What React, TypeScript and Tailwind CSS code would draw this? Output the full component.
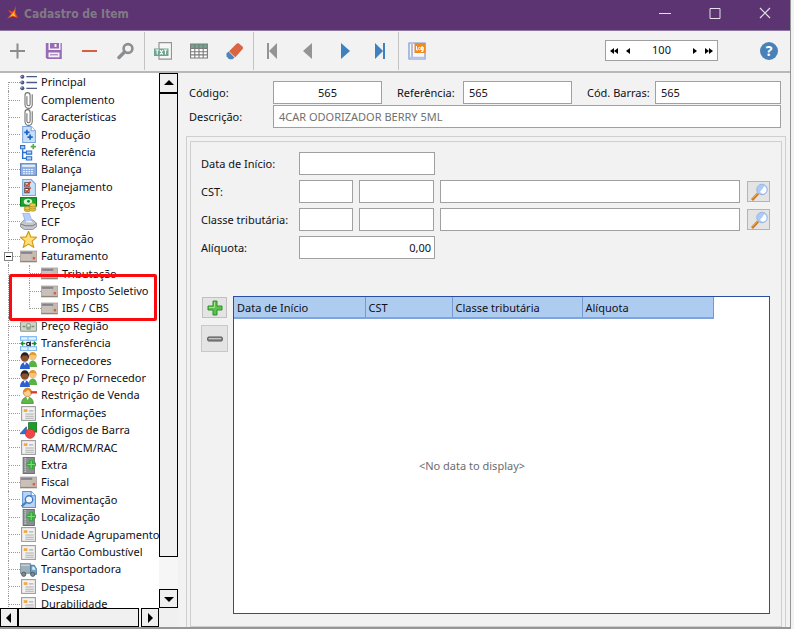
import { ReactNode, useState } from "react";
import clsx from "clsx";

type IconName =
  | "list"
  | "clip"
  | "production"
  | "reference"
  | "scale"
  | "planning"
  | "money"
  | "printer"
  | "star"
  | "card"
  | "banknote"
  | "transfer"
  | "people"
  | "restrict"
  | "info"
  | "shapes"
  | "extra"
  | "movement"
  | "truck";

const icons: Record<IconName, ReactNode> = {
  list: (
    <>
      <path d="M6 2.500h10M6 8h10M6 13.500h10" stroke="#4d5a86" strokeWidth="1.2" />
      <g fill="#4a5388">
        <circle cx="2.200" cy="2.500" r="1.900" />
        <circle cx="2.200" cy="8" r="1.900" />
        <circle cx="2.200" cy="13.500" r="1.900" />
      </g>
      <g fill="#b9c2de">
        <circle cx="1.700" cy="2" r=".7" />
        <circle cx="1.700" cy="7.500" r=".7" />
        <circle cx="1.700" cy="13" r=".7" />
      </g>
    </>
  ),
  clip: (
    <path
      d="M6.500 4v7.500a1.500 1.500 0 0 0 3 0V3a2.200 2.200 0 0 0-4.800 0v9a3.300 3.300 0 0 0 6.800 0V2"
      fill="none"
      stroke="#6f6f6f"
      strokeWidth="1"
    />
  ),
  production: (
    <>
      <path d="M2.500.5h8l4 4v11h-12z" fill="#c9dff8" stroke="#7fa6dc" />
      <path d="M10.500.5v4h4" fill="#fff" stroke="#7fa6dc" />
      <path d="M6.500 3.500v5M4 6h5M9.500 8v5M7 10.500h5" stroke="#1d63c8" strokeWidth="1.600" />
    </>
  ),
  reference: (
    <>
      <path d="M2.500 5v8.500H6M2.500 8H6" fill="none" stroke="#2b70c9" strokeWidth="1.300" />
      <g fill="#b4d5fb" stroke="#2b70c9">
        <path d="M.5 1.500h4v3h-4zM6 6.500h5v3H6zM6 12h5v3H6z" />
      </g>
      <path d="M12.500 0v5M10 2.500h5" stroke="#58a847" strokeWidth="1.500" />
    </>
  ),
  scale: (
    <>
      <rect x=".5" y="2.500" width="15" height="11" fill="#8fb0e0" stroke="#6685bd" />
      <path d="M2 4.500h12" stroke="#e5effc" strokeWidth="2" />
      <path d="M3 8h10M3 10h10M3 12h10" stroke="#fff" strokeDasharray="1.500 1" />
    </>
  ),
  planning: (
    <>
      <path d="M2.500.5h8l4 4v11h-12z" fill="#c9dff8" stroke="#7fa6dc" />
      <path d="M4.500 3.500h4v4h-4zM4.500 9h4v4h-4z" fill="#fff" stroke="#53413f" />
      <path d="m5 5 1.500 1.500L10 2.500M5 10.500 6.500 12 10 8" fill="none" stroke="#d13c25" strokeWidth="1.400" />
    </>
  ),
  money: (
    <>
      <rect x=".5" y="1.500" width="15" height="8" fill="#19a52c" stroke="#0c7d1c" />
      <ellipse cx="7.500" cy="5.500" rx="4" ry="2.800" fill="#d8f3d5" />
      <circle cx="8" cy="5" r="1.300" fill="#168426" />
      <g fill="#e9c84a" stroke="#a98a1b" strokeWidth=".7">
        <ellipse cx="7" cy="13" rx="3" ry="1.800" />
        <ellipse cx="7" cy="11.500" rx="3" ry="1.600" />
        <ellipse cx="12" cy="12.500" rx="3" ry="1.800" />
        <ellipse cx="12" cy="10.500" rx="3" ry="1.800" />
        <ellipse cx="12" cy="8.500" rx="3" ry="1.800" />
      </g>
    </>
  ),
  printer: (
    <>
      <path d="M.5 10 4 6.500h8l3.500 3V13L12 15.500H4L.5 13z" fill="#c4c7cc" stroke="#85898f" strokeWidth=".8" />
      <path d="M1 10.500 5 12h7l3-2" fill="none" stroke="#696d75" strokeWidth=".8" />
      <path d="M2.500 0h6l3 8H5z" fill="#b9cffb" stroke="#8da9e3" strokeWidth=".7" />
      <path d="m5 8.500 1-1h5l1 1.500z" fill="#f5f6f8" />
    </>
  ),
  star: (
    <path
      d="m8 .3 2.100 5.200 5.600.4-4.300 3.600 1.500 5.900L8 12.300l-4.900 3.100 1.500-5.900L.3 5.900l5.600-.4z"
      fill="#ffe07a"
      stroke="#d39a18"
      strokeWidth="1.100"
    />
  ),
  card: (
    <>
      <rect x=".3" y="2.800" width="15.400" height="10.400" fill="#c3bab1" stroke="#a0978e" strokeWidth=".6" />
      <path d="M1 3.500h10.500v2H1z" fill="#85838f" />
      <path d="M1 6.500h9M1 8.500h9M1 10.500h9" stroke="#d3cbc3" strokeWidth=".8" />
      <path d="M12 8.500h2.200v2.200H12z" fill="#e0583a" />
      <path d="M.5 12.700h15" stroke="#8f867d" />
    </>
  ),
  banknote: (
    <>
      <rect x=".5" y="3.500" width="15" height="9" rx="1" fill="#cfd6c8" stroke="#8b9686" />
      <ellipse cx="8" cy="8" rx="2.600" ry="3.300" fill="#98a593" />
      <circle cx="8" cy="7" r="1.200" fill="#e8ece5" />
      <path d="M2.500 8H5M11 8h2.500" stroke="#7d8a79" strokeWidth="1.500" />
    </>
  ),
  transfer: (
    <>
      <path d="M0 1h16v14H0z" fill="#7db8f2" />
      <path d="M1 2h6v2.500H1zM8 2h7v2.500H8zM1 11.500h6V14H1zM8 11.500h7V14H8z" fill="#e4f1fe" />
      <path d="M0 5.500h16v5H0z" fill="#fff" />
      <path d="m0 8 3-2.500v5zM16 8l-3-2.500v5z" fill="#1e8c34" />
      <path d="M2.500 8H5M11 8h2.500" stroke="#1e8c34" strokeWidth="1.500" />
      <circle cx="7.700" cy="8.400" r="1.500" fill="none" stroke="#222" strokeWidth="1.100" />
      <path d="M9.700 6v4.500" stroke="#222" strokeWidth="1.200" />
    </>
  ),
  people: (
    <>
      <circle cx="12" cy="4.300" r="3.500" fill="#f6c27c" />
      <path d="M8.400 4.500c-.4-6 7.600-6 7.200 0L14 2.800H10z" fill="#e39a30" />
      <path d="M8 14c0-8 8-8 8 0z" fill="#59b246" />
      <circle cx="4.500" cy="5.200" r="3.900" fill="#8a4f2d" />
      <path d="M.6 5.800C0-1.500 9.300-1.500 8.400 5.800L6.800 3.200H2.400z" fill="#26201e" />
      <path d="M0 16C0 7.500 9.300 7.500 9.300 16z" fill="#2c5fd0" />
      <path d="m3.300 9.800 1.300 3 1.300-3z" fill="#fff" />
    </>
  ),
  restrict: (
    <>
      <path d="M1.500 15.500c0-8 11-8 11 0z" fill="#5cb748" stroke="#3a8a2b" strokeWidth=".7" />
      <circle cx="7" cy="5.200" r="3.900" fill="#f7cf92" stroke="#b9772a" strokeWidth=".6" />
      <path d="M3 5.500C2-.8 11.800-1 10.900 5 9 4.500 8 3 7.500 2.500 6.500 4 5 4.500 3 5.500z" fill="#e08a24" />
      <path d="m5.800 9.500 1.400 3 1.300-3z" fill="#fff" />
      <path d="M10 5h6" stroke="#dc3a2d" strokeWidth="2.200" />
    </>
  ),
  info: (
    <>
      <rect x="1.500" y="1.500" width="13" height="13" fill="#f1f1f1" stroke="#9b9b9b" />
      <path d="M3.500 4h3.500v2.500H3.500z" fill="#f2a63b" />
      <path d="M8.500 5.500H12.500M5 8.500h8M5 10.500h8M5 12.500h8" stroke="#b0b0b0" />
    </>
  ),
  shapes: (
    <>
      <path d="M8 .5h8v9H8z" fill="#1f9b2c" stroke="#127320" strokeWidth=".7" />
      <path d="M0 11 6 4.500V11z" fill="#2c6fd6" stroke="#1a4ea5" strokeWidth=".7" />
      <circle cx="9.500" cy="11" r="4.500" fill="#ef4545" stroke="#c22" strokeWidth=".5" />
    </>
  ),
  extra: (
    <>
      <path d="M3 .5h10.500v15H3z" fill="#8b8f92" stroke="#6d7073" />
      <path d="M5 1v14" stroke="#c8cbcd" strokeDasharray="1 1" strokeWidth="1.500" />
      <path d="M10.500 2.500v9M6 7h9" stroke="#2fae35" strokeWidth="3.600" />
      <path d="M10.500 3.500v7M7 7h7" stroke="#7fe07a" />
    </>
  ),
  movement: (
    <>
      <path d="M2.500.5h8l4 4v11h-12z" fill="#b7d5fa" stroke="#5c92d8" />
      <path d="M10.500.5v4h4" fill="#fff" stroke="#5c92d8" />
      <circle cx="8.500" cy="8" r="3.500" fill="#edf7ff" stroke="#4477bb" strokeWidth="1.300" />
      <path d="m6 10.500-4.500 4" stroke="#517fb5" strokeWidth="2" />
    </>
  ),
  truck: (
    <>
      <path d="M0 2.500h10v9H0z" fill="#9cb0bc" stroke="#71848f" strokeWidth=".8" />
      <path d="M1 4h8" stroke="#d1dde3" />
      <path d="M10 4h3.500l2.300 4v4.500H10z" fill="#6fa5cf" stroke="#45718f" strokeWidth=".8" />
      <path d="M11.500 5.500h1.700l1.500 2.800h-3.200z" fill="#dcf0fb" />
      <g fill="#83898e" stroke="#4d5357" strokeWidth=".8">
        <circle cx="3.500" cy="12.500" r="2" />
        <circle cx="12" cy="12.500" r="2" />
      </g>
    </>
  ),
};

type TreeItem = { label: string; icon: IconName; child?: boolean; last?: boolean; open?: boolean };

const tree: TreeItem[] = [
  { label: "Principal", icon: "list" },
  { label: "Complemento", icon: "clip" },
  { label: "Características", icon: "clip" },
  { label: "Produção", icon: "production" },
  { label: "Referência", icon: "reference" },
  { label: "Balança", icon: "scale" },
  { label: "Planejamento", icon: "planning" },
  { label: "Preços", icon: "money" },
  { label: "ECF", icon: "printer" },
  { label: "Promoção", icon: "star" },
  { label: "Faturamento", icon: "card", open: true },
  { label: "Tributação", icon: "card", child: true },
  { label: "Imposto Seletivo", icon: "card", child: true },
  { label: "IBS / CBS", icon: "card", child: true, last: true },
  { label: "Preço Região", icon: "banknote" },
  { label: "Transferência", icon: "transfer" },
  { label: "Fornecedores", icon: "people" },
  { label: "Preço p/ Fornecedor", icon: "people" },
  { label: "Restrição de Venda", icon: "restrict" },
  { label: "Informações", icon: "info" },
  { label: "Códigos de Barra", icon: "shapes" },
  { label: "RAM/RCM/RAC", icon: "info" },
  { label: "Extra", icon: "extra" },
  { label: "Fiscal", icon: "card" },
  { label: "Movimentação", icon: "movement" },
  { label: "Localização", icon: "extra" },
  { label: "Unidade Agrupamento", icon: "info" },
  { label: "Cartão Combustível", icon: "info" },
  { label: "Transportadora", icon: "truck" },
  { label: "Despesa", icon: "info" },
  { label: "Durabilidade", icon: "info" },
];

function TreeRow({ item, first }: { item: TreeItem; first: boolean }) {
  return (
    <li className="flex min-h-0 items-stretch pl-2">
      <span
        className={clsx(
          "w-px border-l border-dotted border-[#9a9a9a]",
          first && "mt-2"
        )}
      />
      {item.child && (
        <span className="ml-5 flex w-px flex-col">
          <span className={clsx("border-l border-dotted border-[#9a9a9a]", item.last ? "h-1/2" : "h-full")} />
        </span>
      )}
      <span className="relative w-[11px] self-center border-t border-dotted border-[#9a9a9a]">
        {item.open && (
          <button
            aria-label="Recolher"
            className="absolute -top-[5px] -left-[5px] flex size-[9px] items-center justify-center border border-[#848484] bg-white"
          >
            <span className="h-px w-[5px] bg-black" />
          </button>
        )}
      </span>
      <a href="#" className="flex items-center gap-1 whitespace-nowrap">
        <svg viewBox="0 0 16 16" className="size-[17px] shrink-0">
          {icons[item.icon]}
        </svg>
        {item.label}
      </a>
    </li>
  );
}

function ScrollButton({ label, d, className }: { label: string; d: string; className: string }) {
  return (
    <button
      aria-label={label}
      className={clsx("flex shrink-0 items-center justify-center border border-black bg-[#f0f0f0]", className)}
    >
      <svg viewBox="0 0 10 10" className="size-[10px]">
        <path d={d} />
      </svg>
    </button>
  );
}

function Sidebar() {
  return (
    <aside className="grid w-[178px] shrink-0 grid-cols-[minmax(0,1fr)_19px] grid-rows-[minmax(0,1fr)_19px] bg-white">
      <nav className="relative overflow-hidden">
        <ul className="grid h-[540px] auto-rows-fr pt-px">
          {tree.map((item, i) => (
            <TreeRow key={item.label} item={item} first={i === 0} />
          ))}
        </ul>
        <div className="pointer-events-none absolute top-[201px] left-[9px] h-[47px] w-[148px] rounded-xs border-3 border-[#fb0b10]" />
      </nav>
      <div className="flex flex-col bg-[#f6f6f6]">
        <ScrollButton label="Rolar para cima" d="M5 2 10 7H0z" className="h-[20px]" />
        <div className="h-[464px] border border-black bg-[#f0f0f0]" />
        <div className="flex-1" />
        <ScrollButton label="Rolar para baixo" d="M0 3h10L5 8z" className="h-[19px]" />
      </div>
      <div className="flex bg-[#f6f6f6]">
        <ScrollButton label="Rolar para a esquerda" d="M7 0v10L2 5z" className="w-[18px]" />
        <div className="w-[121px] border border-black bg-[#f0f0f0]" />
        <div className="flex-1" />
        <ScrollButton label="Rolar para a direita" d="M3 0l5 5-5 5z" className="w-[18px]" />
      </div>
      <div className="bg-[#f0f0f0]" />
    </aside>
  );
}

function ToolButton({ label, children }: { label: string; children: ReactNode }) {
  return (
    <button aria-label={label} className="flex w-9 items-center justify-center">
      <svg viewBox="0 0 18 18" className="size-[18px]">
        {children}
      </svg>
    </button>
  );
}

function Separator() {
  return <span className="my-px w-px bg-[#c3c3c3]" />;
}

function Toolbar() {
  const [zoom, setZoom] = useState("100");

  return (
    <div className="flex h-[42px] shrink-0 items-stretch border-b-2 border-[#b8b8b8] bg-[#f2f2f2]">
      <ToolButton label="Novo">
        <path d="M8.500 1.500v15M1 9h15" stroke="#8c8c8c" strokeWidth="2" />
      </ToolButton>
      <ToolButton label="Salvar">
        <path d="M.8 1h16v16H2.200L.8 15.600z" fill="#976bb5" />
        <path d="M3.500 1h1.500v5.500h9V1h1.500v7h-12z" fill="#f2f2f2" />
        <path d="M9.500 2h2v3h-2z" fill="#f2f2f2" />
        <path d="M3.500 10.500h11v4.800h-11z" fill="#f2f2f2" />
        <path d="M5 12.800h8" stroke="#976bb5" />
      </ToolButton>
      <ToolButton label="Excluir">
        <path d="M1 9h15" stroke="#d8603f" strokeWidth="2" />
      </ToolButton>
      <ToolButton label="Pesquisar">
        <circle cx="11" cy="6.500" r="4.400" fill="none" stroke="#8a8f94" strokeWidth="2.600" />
        <path d="m7.500 10-5.500 5.500" stroke="#8a8f94" strokeWidth="3.400" strokeLinecap="round" />
      </ToolButton>
      <Separator />
      <ToolButton label="Exportar TXT">
        <path d="M5 7V.7h12.500v16.500H5V14" fill="#f7f7f7" stroke="#949494" strokeWidth="1.200" />
        <path d="M0 6.500h14.500v7.500H0z" fill="#6fa58e" />
        <path
          d="M1.500 8h3.500M3.200 8v4.500M6 8l2.800 4.500M8.800 8 6 12.500M9.800 8h3.500M11.500 8v4.500"
          stroke="#fff"
          strokeWidth="1.100"
        />
      </ToolButton>
      <ToolButton label="Grade">
        <path d="M.6 2h16.800v14H.6z" fill="#fff" />
        <path d="M.6 2h16.800v4.500H.6z" fill="#6fa58e" />
        <path
          d="M.6 2h16.800v14H.6zM.6 6.500h16.800M.6 9.700h16.800M.6 12.900h16.800M4.800 2v14M9 2v14M13.200 2v14"
          fill="none"
          stroke="#7b7b7b"
          strokeWidth="1.100"
        />
      </ToolButton>
      <ToolButton label="Limpar">
        <path d="m2.500 9.500 6 6-2 1.800H3.200L.5 14.500v-3z" fill="#4c84be" />
        <path d="M10.500 1.800q1-1 2.200-.5l4 3.500q.8 1 0 2.200l-7.400 8.200-6.300-6z" fill="#db6443" />
      </ToolButton>
      <Separator />
      <ToolButton label="Primeiro">
        <path d="M4 1h2v16H4zM14 1v16L6 9z" fill="#949494" />
      </ToolButton>
      <ToolButton label="Anterior">
        <path d="M13 1v16L4 9z" fill="#949494" />
      </ToolButton>
      <ToolButton label="Próximo">
        <path d="M6 1v16l9-8z" fill="#3f80be" />
      </ToolButton>
      <ToolButton label="Último">
        <path d="M12 1h2v16h-2zM4 1v16l8-8z" fill="#3f80be" />
      </ToolButton>
      <Separator />
      <ToolButton label="Log">
        <path d="M1 1h16v16H1z" fill="#f5f8ff" stroke="#7f93c8" strokeWidth="1.200" />
        <path d="M4 2.500v13" stroke="#6f86c0" strokeWidth="2" strokeDasharray="1 1" />
        <path d="M1 15.500h16" stroke="#b4c2e6" strokeWidth="1.500" />
        <path d="M6.500 1h11v10h-11z" fill="#ef8b1e" />
        <path d="M8.500 4v4h1.500M15 4.800h-1.500V8H15V5v4.500h-2" fill="none" stroke="#fff" />
        <circle cx="11.500" cy="6.500" r="1.200" fill="none" stroke="#fff" />
      </ToolButton>

      <div className="mt-[9px] mr-[42px] ml-auto flex h-[21px] w-[113px] items-center border border-[#a0a0a0] bg-white">
        <button aria-label="Mínimo" className="w-4 pl-1">
          <svg viewBox="0 0 8 6" className="h-[6px] w-[8px]">
            <path d="M4 0v6L0 3zM8 0v6L4 3z" />
          </svg>
        </button>
        <button aria-label="Diminuir" className="flex w-3 justify-center">
          <svg viewBox="0 0 4 6" className="h-[6px] w-[4px]">
            <path d="M4 0v6L0 3z" />
          </svg>
        </button>
        <input
          aria-label="Quantidade"
          value={zoom}
          onChange={(e) => setZoom(e.target.value)}
          className="min-w-0 flex-1 bg-transparent text-center outline-none"
        />
        <button aria-label="Aumentar" className="flex w-3 justify-center">
          <svg viewBox="0 0 4 6" className="h-[6px] w-[4px]">
            <path d="M0 0v6l4-3z" />
          </svg>
        </button>
        <button aria-label="Máximo" className="w-4 pl-1">
          <svg viewBox="0 0 8 6" className="h-[6px] w-[8px]">
            <path d="M0 0v6l4-3zM4 0v6l4-3z" />
          </svg>
        </button>
      </div>
      <button
        aria-label="Ajuda"
        className="mt-[11px] mr-3 flex size-[18px] items-center justify-center rounded-full bg-[#4a80b8] text-sm font-bold text-white"
      >
        ?
      </button>
    </div>
  );
}

function TitleBar() {
  return (
    <header className="flex h-[31px] shrink-0 items-center border-b border-[#8d76a0] bg-[#5b3471] pl-[7px]">
      <svg viewBox="0 0 12 14" className="mb-1 h-[14px] w-[12px]">
        <path d="M9 0 8.300 6.500 11 12 6 10.500 0 12.500 4.200 8 1 4l5 2z" fill="#f04a23" />
        <path d="M7.500 4 7.300 8l1.700 2.800L5.500 9.500 2.500 11 6 7z" fill="#ffc02e" />
      </svg>
      <h1 className="ml-[5px] pb-[2px] font-['DejaVu_Sans_Condensed','Noto_Sans',sans-serif] text-[12px] font-bold text-[#817a86]">
        Cadastro de Item
      </h1>
      <div className="ml-auto flex pb-1">
        <button aria-label="Minimizar" className="flex w-[50px] justify-center">
          <svg viewBox="0 0 12 12" className="size-[12px]">
            <path d="M0 6.500h12" stroke="#e6dfea" />
          </svg>
        </button>
        <button aria-label="Maximizar" className="flex w-[50px] justify-center">
          <svg viewBox="0 0 12 12" className="size-[12px]">
            <path d="M1 1.500h10v10H1z" fill="none" stroke="#e6dfea" />
          </svg>
        </button>
        <button aria-label="Fechar" className="flex w-[50px] justify-center">
          <svg viewBox="0 0 12 12" className="size-[12px]">
            <path d="m1 1 10 10M11 1 1 11" stroke="#e6dfea" strokeWidth="1.200" />
          </svg>
        </button>
      </div>
    </header>
  );
}

const field = "h-[23px] min-w-0 border border-[#a0a0a0] bg-white outline-none";
const caption = "shrink-0 pt-[2px] whitespace-nowrap";

function LookupRow({ id, label }: { id: string; label: string }) {
  return (
    <div className="flex items-center">
      <label htmlFor={id} className={clsx(caption, "w-[98px]")}>
        {label}
      </label>
      <input id={id} className={clsx(field, "w-[54px] shrink-0 px-[5px]")} />
      <input aria-label={`${label} código`} className={clsx(field, "ml-[6px] w-[75px] shrink-0 px-[5px]")} />
      <input aria-label={`${label} descrição`} className={clsx(field, "ml-[6px] flex-1 px-[5px]")} />
      <button
        aria-label={`Pesquisar ${label}`}
        className="ml-[7px] flex h-[21px] w-[23px] shrink-0 items-center justify-center border border-[#b4b4b4] bg-[#e4e4e4]"
      >
        <svg viewBox="0 0 18 18" className="size-[18px]">
          <path d="m8 10.500-6 6.500" stroke="#c77a2c" strokeWidth="2.600" />
          <path d="m7.500 10-5 5.500" stroke="#f3b552" />
          <circle cx="12" cy="6.500" r="5.300" fill="#a9cbf5" stroke="#93afe0" strokeWidth=".8" />
          <path d="M10 9 14.500 3q3.500 3 1 6.500-2.500 2.500-5.500-.5z" fill="#fff" />
        </svg>
      </button>
    </div>
  );
}

const columns = [
  { label: "Data de Início", className: "w-[131px]" },
  { label: "CST", className: "w-[87px]" },
  { label: "Classe tributária", className: "w-[130px]" },
  { label: "Alíquota", className: "w-[131px]" },
];

function TaxGrid() {
  return (
    <div className="mt-[37px] flex min-h-0 flex-1 items-stretch">
      <div className="flex w-[32px] shrink-0 flex-col items-start gap-[7px] pt-px">
        <button
          aria-label="Adicionar"
          className="ml-px flex h-[21px] w-[25px] items-center justify-center border border-[#c0c0c0] bg-[#e4e4e4]"
        >
          <svg viewBox="0 0 16 16" className="size-[16px]">
            <path d="M6 1h4v5h5v4h-5v5H6v-5H1V6h5z" fill="#5cc24b" stroke="#2f8f2c" />
            <path d="M7.500 2v5.500H2" fill="none" stroke="#a5e38f" />
          </svg>
        </button>
        <button
          aria-label="Remover"
          className="flex size-[27px] items-center justify-center border border-[#c8c8c8] bg-[#e4e4e4]"
        >
          <svg viewBox="0 0 16 16" className="size-[16px]">
            <rect x=".7" y="6" width="14.600" height="4" rx="1" fill="#8e8e8e" stroke="#555" />
            <path d="M2 7.500h12" stroke="#c8c8c8" />
          </svg>
        </button>
      </div>
      <div className="flex min-w-0 flex-1 flex-col border border-[#2a4ea2] bg-white">
        <table className="table-fixed self-start text-left">
          <thead>
            <tr className="h-[21px] border-b-2 border-[#7fa3df] bg-[#aecbf0]">
              {columns.map((col) => (
                <th
                  key={col.label}
                  className={clsx(
                    "border-r border-[#7898d0] pt-[2px] pl-[3px] font-normal whitespace-nowrap",
                    col.className
                  )}
                >
                  {col.label}
                </th>
              ))}
            </tr>
          </thead>
        </table>
        <p className="flex flex-1 items-center justify-center pr-[59px] text-[#6d6d6d]">
          &lt;No data to display&gt;
        </p>
      </div>
    </div>
  );
}

function ItemForm() {
  return (
    <main className="flex min-w-0 flex-1 flex-col pr-[4px] pl-2">
      <div className="flex flex-col gap-px pt-[8px] pr-[5px] pl-[3px]">
        <div className="flex items-center">
          <label htmlFor="codigo" className={clsx(caption, "w-[84px]")}>
            Código:
          </label>
          <input id="codigo" defaultValue="565" className={clsx(field, "w-[109px] text-center")} />
          <label htmlFor="referencia" className={clsx(caption, "ml-[15px] w-[66px]")}>
            Referência:
          </label>
          <input id="referencia" defaultValue="565" className={clsx(field, "w-[109px] px-[5px]")} />
          <label htmlFor="barras" className={clsx(caption, "ml-[15px] w-[68px]")}>
            Cód. Barras:
          </label>
          <input id="barras" defaultValue="565" className={clsx(field, "flex-1 px-[5px]")} />
        </div>
        <div className="flex items-center">
          <label htmlFor="descricao" className={clsx(caption, "w-[84px]")}>
            Descrição:
          </label>
          <input
            id="descricao"
            defaultValue="4CAR ODORIZADOR BERRY 5ML"
            className={clsx(field, "flex-1 px-[5px] text-[#707070]")}
          />
        </div>
      </div>

      <section className="mt-[8px] flex min-h-0 flex-1 flex-col border border-b-0 border-[#cfcfcf] px-[3px] pt-1">
        <div className="flex min-h-0 flex-1 flex-col border border-[#cfcfcf] pt-[10px] pr-[11px] pb-3 pl-[10px]">
          <div className="flex flex-col gap-[5px]">
            <div className="flex items-center">
              <label htmlFor="inicio" className={clsx(caption, "w-[98px]")}>
                Data de Início:
              </label>
              <input id="inicio" className={clsx(field, "w-[136px] px-[5px]")} />
            </div>
            <LookupRow id="cst" label="CST:" />
            <LookupRow id="classe" label="Classe tributária:" />
            <div className="flex items-center">
              <label htmlFor="aliquota" className={clsx(caption, "w-[98px]")}>
                Alíquota:
              </label>
              <input
                id="aliquota"
                defaultValue="0,00"
                className={clsx(field, "w-[136px] px-[3px] text-right")}
              />
            </div>
          </div>
          <TaxGrid />
        </div>
      </section>
    </main>
  );
}

export default function App() {
  return (
    <div className="h-screen bg-[#f2f2f2] pr-[3px] font-['Noto_Sans',sans-serif] text-[11px] text-[#101018]">
      <div className="flex h-full flex-col border-r border-b-2 border-[#969696] bg-[#f2f2f2]">
        <TitleBar />
        <Toolbar />
        <div className="flex min-h-0 flex-1">
          <Sidebar />
          <ItemForm />
        </div>
      </div>
    </div>
  );
}
